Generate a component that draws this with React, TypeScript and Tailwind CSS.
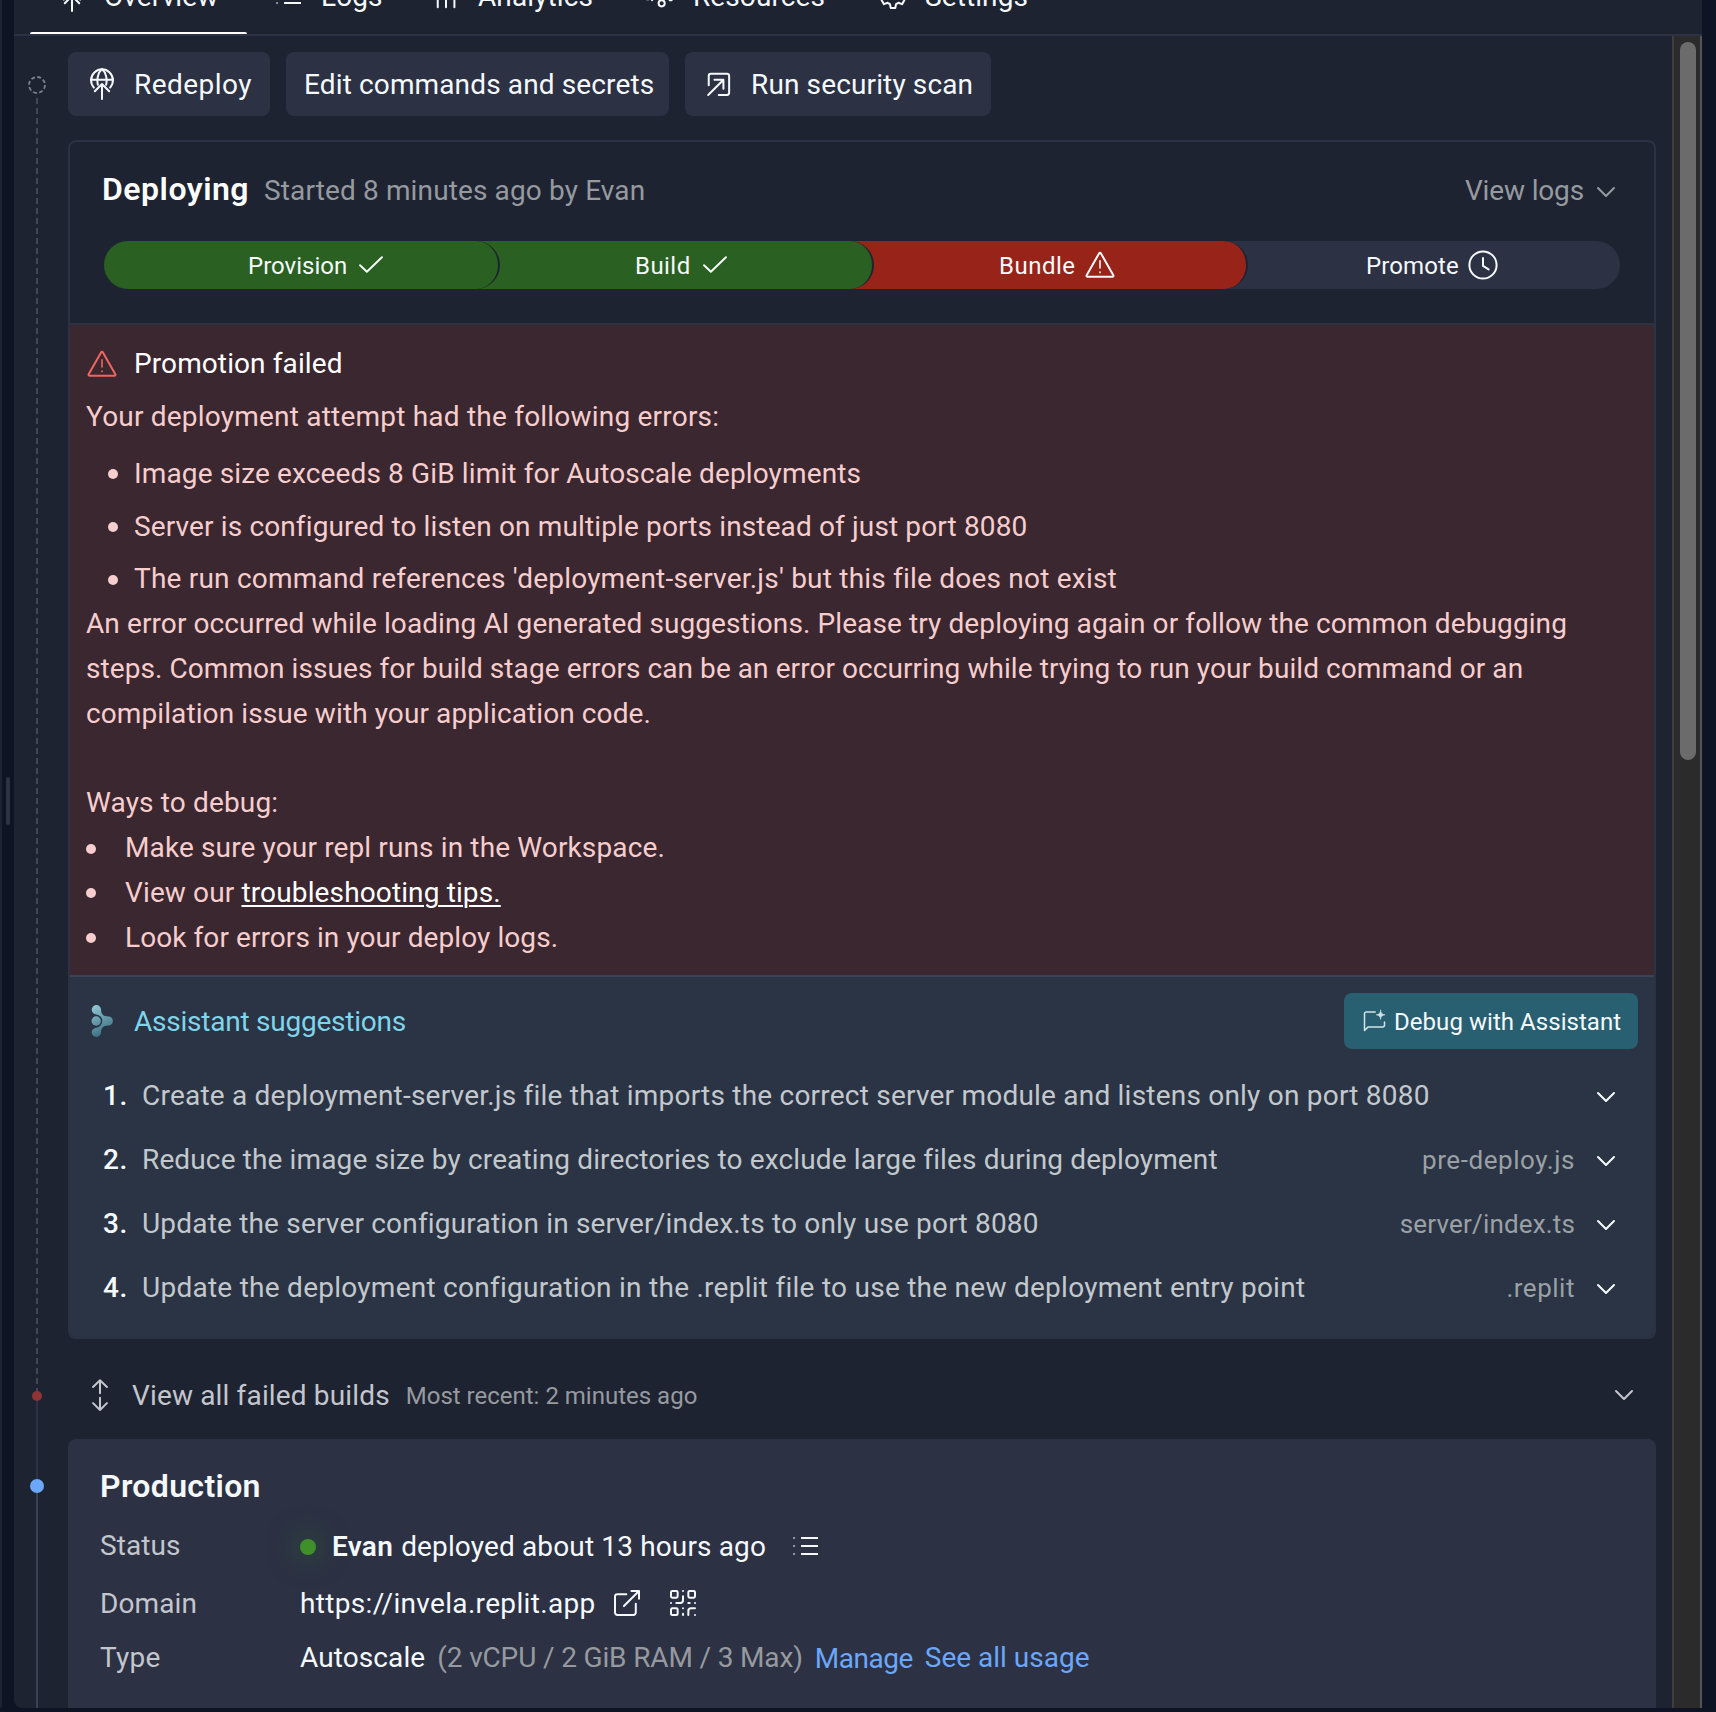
import React from "react";
import { ChevronDown, QrCode } from "lucide-react";

type IconProps = { className?: string };

function Svg({ className = "size-8", children }: IconProps & { children: React.ReactNode }) {
  return (
    <svg
      viewBox="0 0 24 24"
      className={`shrink-0 ${className}`}
      fill="none"
      stroke="currentColor"
      strokeWidth={1.5}
      strokeLinecap="round"
      strokeLinejoin="round"
    >
      {children}
    </svg>
  );
}

const DeployIcon = (p: IconProps) => (
  <Svg {...p}>
    <path d="M5.9 14.7A8.2 8.2 0 1 1 18.1 14.7" />
    <path d="M3.8 8.9h16.4" />
    <path d="M8.9 12.6C7.9 8.4 9 3.4 12 .8c3 2.6 4.1 7.600 3.1 11.800" />
    <path d="M12 23.200V12.200M6.600 17.400 12 12l5.400 5.400" />
  </Svg>
);

const ListIcon = (p: IconProps) => (
  <Svg {...p}>
    <path d="M8.300 5.250h12.700M8.300 11.250h12.700M8.300 17.250h12.700" strokeLinecap="butt" />
    <path d="M2.300 5.250h1.500M2.300 11.250h1.500M2.300 17.250h1.500" strokeLinecap="butt" opacity={0.5} />
  </Svg>
);

const BarsIcon = (p: IconProps) => (
  <Svg {...p}>
    <path d="M5.800 20.500V10M12 20.500V4M18.300 20.500V7" />
  </Svg>
);

const ResourcesIcon = (p: IconProps) => (
  <Svg {...p}>
    <path d="M1.500 14.500h1M5.300 15.200l.3-7" />
    <circle cx="12.500" cy="17.500" r="2.300" />
    <path d="M12.500 14V6M18.500 8v7.200h1.500" />
  </Svg>
);

const GearIcon = (p: IconProps) => (
  <Svg {...p}>
    <path d="M10.300 3h3.400l.6 2.900 1.700 1 2.800-1 1.700 3-2.200 2v2.200l2.200 2-1.700 3-2.800-1-1.700 1-.6 2.900h-3.400l-.6-2.900-1.700-1-2.800 1-1.700-3 2.200-2v-2.200l-2.200-2 1.700-3 2.800 1 1.700-1z" />
    <circle cx="12" cy="12" r="2" />
  </Svg>
);

const OpenArrowIcon = (p: IconProps) => (
  <Svg {...p}>
    <path d="M4.300 13V6A1.600 1.600 0 0 1 5.900 4.400H18A1.600 1.600 0 0 1 19.600 6v12.600A1.600 1.600 0 0 1 18 20.200h-6.200" />
    <path d="M3.900 20.200 15.200 9M8.600 8.900h6.700v6.700" />
  </Svg>
);

const CheckIcon = (p: IconProps) => (
  <Svg {...p}>
    <path d="M3.800 12.200 8.900 17 20.200 6.200" />
  </Svg>
);

const WarningIcon = (p: IconProps) => (
  <Svg {...p}>
    <path d="M11.300 3.300 2 19.700a.8.8 0 0 0 .7 1.200h18.600a.8.8 0 0 0 .7-1.200L12.700 3.300a.8.8 0 0 0-1.400 0Z" />
    <path d="M12 8.900v5.300" strokeWidth={1.200} />
    <path d="M12 17.300v.4" strokeWidth={1.200} />
  </Svg>
);

const ClockIcon = (p: IconProps) => (
  <Svg {...p}>
    <circle cx="12" cy="12" r="10.200" />
    <path d="M12 6.700v6l4.200 2.600" />
  </Svg>
);

const ChatSparkIcon = (p: IconProps) => (
  <Svg {...p}>
    <path d="M13.200 3H4.200A1.700 1.700 0 0 0 2.500 4.700v16.800l3.700-3.600h14.600a1.700 1.700 0 0 0 1.700-1.700V13" />
    <path
      d="M18.600 1.200c.4 3.200 1.300 4.100 4.400 4.600-3.100.5-4 1.400-4.400 4.600-.4-3.200-1.300-4.100-4.400-4.600 3.100-.5 4-1.400 4.400-4.600Z"
      fill="currentColor"
      strokeWidth={0.600}
    />
  </Svg>
);

const ExternalIcon = (p: IconProps) => (
  <Svg {...p}>
    <path d="M11.500 5.400H4.800A1.800 1.800 0 0 0 3 7.200v12A1.800 1.800 0 0 0 4.800 21h12a1.800 1.800 0 0 0 1.800-1.800v-6.700" />
    <path d="M15.300 3H21v5.900M21 3 9.700 14.300" />
  </Svg>
);

const UpDownIcon = (p: IconProps) => (
  <Svg {...p}>
    <path d="M12 10.600V.900M6.800 6 12 .900 17.200 6M12 14v9.200M6.800 18.100l5.200 5.100 5.200-5.100" />
  </Svg>
);

function AssistantLogo() {
  return (
    <svg viewBox="0 0 32 32" className="size-8 shrink-0">
      <defs>
        <linearGradient id="assistant" x1="6" y1="2" x2="20" y2="31" gradientUnits="userSpaceOnUse">
          <stop offset="0" stopColor="#8fc6d3" />
          <stop offset="1" stopColor="#38697c" />
        </linearGradient>
      </defs>
      <g fill="url(#assistant)">
        <path d="M10.400 0a4.700 4.700 0 0 1 4.700 4.700c0 2.800.8 5.200 3.600 6.300l4.300.6a4.500 4.500 0 0 1 0 8.900l-4.300.6c-2.800 1-3.600 3.400-3.600 6.200a4.700 4.700 0 1 1-9.400 0c0-2.600 2.100-4.300 4.700-4.600a6.700 6.700 0 0 0 0-13.300C7.800 9 5.700 7.300 5.700 4.700A4.700 4.700 0 0 1 10.400 0Z" />
        <circle cx="10.200" cy="16" r="4.700" />
      </g>
    </svg>
  );
}

const tabs = [
  { label: "Overview", Icon: DeployIcon, width: "w-[217px]", active: true },
  { label: "Logs", Icon: ListIcon, width: "w-[157px]" },
  { label: "Analytics", Icon: BarsIcon, width: "w-[215px]" },
  { label: "Resources", Icon: ResourcesIcon, width: "w-[232px]" },
  { label: "Settings", Icon: GearIcon, width: "w-[204px]" },
];

function TabBar() {
  return (
    <header className="h-9 shrink-0 overflow-hidden border-b-2 border-[#2c3144]">
      <nav className="-mt-9 flex h-[70px] pl-4">
        {tabs.map(({ label, Icon, width, active }) => (
          <div key={label} className={`flex flex-col ${width}`}>
            <div className="flex h-16 items-center gap-4 px-[26px] font-[450] tracking-[0.100px]">
              <Icon />
              <span className="pt-0.5">{label}</span>
            </div>
            {active && <div className="mt-1 h-0.5 rounded-t bg-white" />}
          </div>
        ))}
      </nav>
    </header>
  );
}

function Timeline() {
  return (
    <div className="flex w-[54px] shrink-0 flex-col items-center pr-2 pt-10">
      <svg viewBox="0 0 20 20" className="size-5 shrink-0" fill="none" stroke="#7a7f8c" strokeWidth={1.800}>
        <circle cx="10" cy="9" r="8" strokeDasharray="4 2.280" />
      </svg>
      <div className="mt-0.5 h-[1293px] w-0.5 shrink-0 bg-[repeating-linear-gradient(#42475a_0_6px,transparent_6px_10px)]" />
      <div className="size-2.5 shrink-0 rounded-full bg-[#8f3435]" />
      <div className="h-[78px] w-0.5 shrink-0 bg-[#2c3144]" />
      <div className="size-3.5 shrink-0 rounded-full bg-[#6ba7fa]" />
      <div className="w-0.5 flex-1 bg-[#3c4053]" />
    </div>
  );
}

const actionButton =
  "flex h-16 items-center gap-4 whitespace-nowrap rounded-lg bg-[#2c3144] px-[18px] font-[450]";

function Actions() {
  return (
    <div className="flex gap-4">
      <button className={`${actionButton} w-[202px] tracking-[0.450px]`}>
        <DeployIcon />
        <span className="pt-0.5">Redeploy</span>
      </button>
      <button className={`${actionButton} w-[383px] tracking-[0.130px]`}>
        <span className="pt-0.5">Edit commands and secrets</span>
      </button>
      <button className={`${actionButton} w-[306px] tracking-[0.130px]`}>
        <OpenArrowIcon />
        <span className="pt-0.5">Run security scan</span>
      </button>
    </div>
  );
}

const segment = "flex h-12 items-center gap-2 text-2xl font-[450]";
const overlapping = "rounded-r-full border-r-2 border-[#1e2332]";

function Progress() {
  return (
    <div className="mt-[29px] flex">
      <div className={`${segment} ${overlapping} z-30 w-[396px] rounded-l-full bg-[#2a6021] pl-[144px]`}>
        <span className="pt-0.5">Provision</span>
        <CheckIcon />
      </div>
      <div className={`${segment} ${overlapping} z-20 -ml-8 w-[406px] bg-[#2a6021] pl-[167px]`}>
        <span className="pt-0.5 tracking-[0.450px]">Build</span>
        <CheckIcon />
      </div>
      <div className={`${segment} ${overlapping} z-10 -ml-8 w-[406px] bg-[#982318] pl-[157px]`}>
        <span className="pt-0.5 tracking-[0.500px]">Bundle</span>
        <WarningIcon />
      </div>
      <div className={`${segment} -ml-8 w-[404px] rounded-r-full bg-[#2c3144] pl-[150px]`}>
        <span className="pt-0.5 tracking-[0.100px]">Promote</span>
        <ClockIcon />
      </div>
    </div>
  );
}

const errors = [
  { text: "Image size exceeds 8 GiB limit for Autoscale deployments", tracking: "tracking-[0.130px]" },
  { text: "Server is configured to listen on multiple ports instead of just port 8080", tracking: "tracking-[0.130px]" },
  { text: "The run command references 'deployment-server.js' but this file does not exist", tracking: "tracking-[0.210px]" },
];

const Dot = () => <span className="size-2.5 shrink-0 rounded-full bg-current" />;

function FailurePanel() {
  return (
    <section className="h-[650px] bg-[#3b2730] px-4 pt-4 leading-[44.800px] text-[#f7cecd]">
      <div className="flex h-[45px] items-center gap-4 font-[450] tracking-[0.100px] text-white">
        <WarningIcon className="size-8 text-[#ef6660]" />
        <span className="pt-0.5">Promotion failed</span>
      </div>
      <p className="mt-[9px] tracking-[0.210px]">Your deployment attempt had the following errors:</p>
      <ul className="mt-3 flex flex-col gap-2">
        {errors.map(({ text, tracking }) => (
          <li key={text} className="flex items-center gap-4 pl-[22px]">
            <Dot />
            <span className={tracking}>{text}</span>
          </li>
        ))}
      </ul>
      <p className="whitespace-nowrap tracking-[0.100px]">
        An error occurred while loading AI generated suggestions. Please try deploying again or follow the common debugging
        <br />
        <span className="tracking-[0.070px]">
          steps. Common issues for build stage errors can be an error occurring while trying to run your build command or an
        </span>
        <br />
        compilation issue with your application code.
      </p>
      <p className="mt-[44.800px] tracking-[0.150px]">Ways to debug:</p>
      <ul className="tracking-[0.130px]">
        <li className="flex items-center gap-[29px]">
          <Dot />
          Make sure your repl runs in the Workspace.
        </li>
        <li className="flex items-center gap-[29px]">
          <Dot />
          <span>
            View our{" "}
            <a className="text-white underline decoration-2 underline-offset-[3px]">troubleshooting tips.</a>
          </span>
        </li>
        <li className="flex items-center gap-[29px]">
          <Dot />
          <span className="tracking-[0.080px]">Look for errors in your deploy logs.</span>
        </li>
      </ul>
    </section>
  );
}

const suggestions = [
  {
    text: "Create a deployment-server.js file that imports the correct server module and listens only on port 8080",
    tracking: "tracking-[0.215px]",
  },
  {
    text: "Reduce the image size by creating directories to exclude large files during deployment",
    tracking: "tracking-[0.130px]",
    file: "pre-deploy.js",
    fileTracking: "tracking-[0.570px]",
  },
  {
    text: "Update the server configuration in server/index.ts to only use port 8080",
    tracking: "tracking-[0.185px]",
    file: "server/index.ts",
    fileTracking: "tracking-[0.160px]",
  },
  {
    text: "Update the deployment configuration in the .replit file to use the new deployment entry point",
    tracking: "tracking-[0.260px]",
    file: ".replit",
    fileTracking: "tracking-[0.520px]",
  },
];

function AssistantPanel() {
  return (
    <section className="h-[360px] rounded-b-md bg-[#2a3444] px-4 pt-4">
      <div className="flex h-14 items-center gap-4">
        <AssistantLogo />
        <h3 className="pt-0.5 font-[450] tracking-[-0.230px] text-[#7fd5ea]">Assistant suggestions</h3>
        <button className="ml-auto flex h-14 w-[294px] items-center gap-2 whitespace-nowrap rounded-lg bg-[#285f71] px-[18px] text-2xl font-[450] tracking-[0.050px]">
          <ChatSparkIcon className="size-6 text-[#d3e3e8]" />
          <span className="pt-0.5">Debug with Assistant</span>
        </button>
      </div>
      <ol className="mt-[15px] pr-4">
        {suggestions.map(({ text, tracking, file, fileTracking }, i) => (
          <li key={text} className="flex h-16 items-center whitespace-nowrap">
            <span className="w-14 shrink-0 pl-[17px] font-medium tracking-[0.500px]">{i + 1}.</span>
            <span className={`text-[#c3c8cc] ${tracking}`}>{text}</span>
            <span className={`ml-auto mr-[15px] text-[26px] text-[#9ba0a5] ${fileTracking}`}>{file}</span>
            <ChevronDown className="size-8 shrink-0 translate-y-px" strokeWidth={1.500} />
          </li>
        ))}
      </ol>
    </section>
  );
}

function DeployCard() {
  return (
    <article className="mt-6 h-[1199px] shrink-0 rounded-lg border-2 border-[#2c3144]">
      <div className="h-[183px] border-b-2 border-[#2c3144] px-[34px] pt-6">
        <div className="flex h-[46px] items-center text-[#969a9f]">
          <h2 className="-ml-0.5 w-[162px] text-[32px] font-semibold tracking-[0.500px] text-white">Deploying</h2>
          <span className="pt-[3px] tracking-[0.130px]">Started 8 minutes ago by Evan</span>
          <span className="ml-auto mr-1.5 pt-[3px] tracking-[-0.150px]">View logs</span>
          <ChevronDown className="-mr-0.5 size-8 translate-y-[3px]" strokeWidth={1.500} />
        </div>
        <Progress />
      </div>
      <FailurePanel />
      <div className="h-0.5 bg-[#3c4257]" />
      <AssistantPanel />
    </article>
  );
}

function FailedBuilds() {
  return (
    <div className="mb-[5px] mt-4 flex h-[79px] shrink-0 items-center px-4 text-[#c3c6cc]">
      <UpDownIcon />
      <span className="ml-4 pt-0.5 tracking-[0.150px]">View all failed builds</span>
      <span className="ml-4 pt-0.5 text-2xl text-[#969a9f]">Most recent: 2 minutes ago</span>
      <ChevronDown className="ml-auto size-8" strokeWidth={1.500} />
    </div>
  );
}

function Production() {
  return (
    <article className="flex-1 overflow-hidden whitespace-nowrap rounded-t-lg bg-[#2c3144] px-8 pt-6">
      <h2 className="flex h-11 items-center pt-0.5 text-[32px] font-semibold tracking-[0.350px]">Production</h2>
      <dl className="mt-2.5 grid grid-cols-[200px_1fr] grid-rows-[57px_58px_51px] items-center">
        <dt className="text-[#c3c6cc] tracking-[0.100px]">Status</dt>
        <dd className="flex items-center pt-[3px]">
          <span className="size-4 shrink-0 rounded-full bg-[#3f8f2b] shadow-[0_0_28px_3px_#2f6e2a99]" />
          <span className="ml-4 font-semibold tracking-[0.300px]">Evan</span>
          <span className="ml-2 font-[450] tracking-[0.140px]">deployed about 13 hours ago</span>
          <ListIcon className="ml-6 size-8" />
        </dd>
        <dt className="pt-0.5 text-[#c3c6cc] tracking-[0.100px]">Domain</dt>
        <dd className="flex items-center">
          <span className="pt-0.5 tracking-[0.330px]">https://invela.replit.app</span>
          <ExternalIcon className="ml-[15px] size-8" />
          <QrCode className="ml-6 size-8" strokeWidth={1.500} />
        </dd>
        <dt className="text-[#c3c6cc] tracking-[0.300px]">Type</dt>
        <dd className="flex items-center">
          <span className="tracking-[0.100px]">Autoscale</span>
          <span className="ml-3 tracking-[-0.150px] text-[#969a9f]">(2 vCPU / 2 GiB RAM / 3 Max)</span>
          <a className="ml-3 pt-0.5 tracking-[-0.500px] text-[#6ba7fa]">Manage</a>
          <a className="ml-3 text-[#6ba7fa]">See all usage</a>
        </dd>
      </dl>
    </article>
  );
}

export default function App() {
  return (
    <div className="flex h-[1712px] w-[1716px] overflow-hidden bg-[#0e1423] font-['Roboto',sans-serif] text-[28px] text-[#f5f9fc]">
      <div className="h-[1708px] w-0.5 shrink-0 rounded-br bg-[#1e2332]" />
      <div className="flex w-3 shrink-0 justify-center pt-[777px]">
        <div className="h-12 w-1 rounded-full bg-[#2c3144]" />
      </div>
      <main className="flex h-[1708px] w-[1688px] flex-col overflow-hidden rounded-bl-lg bg-[#1e2332]">
        <TabBar />
        <div className="flex min-h-0 flex-1">
          <Timeline />
          <div className="flex w-[1588px] shrink-0 flex-col pt-4">
            <Actions />
            <DeployCard />
            <FailedBuilds />
            <Production />
          </div>
          <div className="ml-4 w-[30px] shrink-0 border-l-2 border-r-2 border-l-[#3e3e3e] border-r-[#555555] bg-[#2b2b2b] pl-1.5 pt-1.5">
            <div className="h-[718px] w-4 rounded-full bg-[#6b6b6b]" />
          </div>
        </div>
      </main>
    </div>
  );
}
